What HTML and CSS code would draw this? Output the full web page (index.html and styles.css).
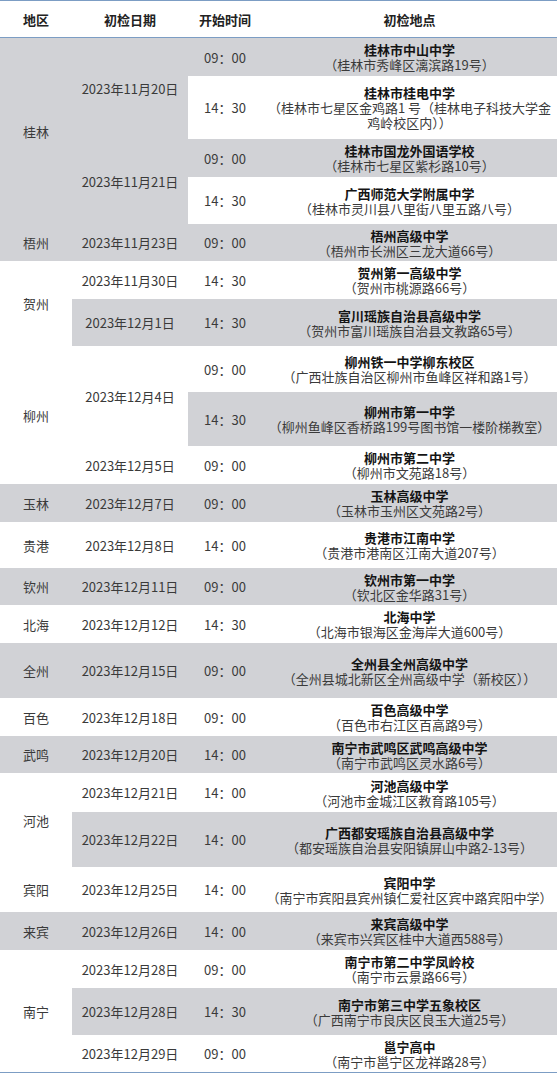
FILE: index.html
```html
<!DOCTYPE html>
<html lang="zh-CN">
<head>
<meta charset="utf-8">
<title>初检安排</title>
<link rel="stylesheet" href="styles.css">
</head>
<body>
<div class="wrap">
<table class="sched">
  <colgroup>
    <col class="c-area"><col class="c-date"><col class="c-time"><col class="c-place">
  </colgroup>
  <thead>
    <tr class="head"><th>地区</th><th>初检日期</th><th>开始时间</th><th>初检地点</th></tr>
  </thead>
  <tbody>
    <tr class="h38">
      <td class="g" rowspan="4">桂林</td>
      <td class="g" rowspan="2">2023年11月20日</td>
      <td class="g">09：00</td>
      <td class="g place"><b>桂林市中山中学</b><span>（桂林市秀峰区漓滨路19号）</span></td>
    </tr>
    <tr class="h63">
      <td>14：30</td>
      <td class="place"><b>桂林市桂电中学</b><span>（桂林市七星区金鸡路1 号（桂林电子科技大学金鸡岭校区内））</span></td>
    </tr>
    <tr class="h38">
      <td class="g" rowspan="2">2023年11月21日</td>
      <td class="g">09：00</td>
      <td class="g place"><b>桂林市国龙外国语学校</b><span>（桂林市七星区紫杉路10号）</span></td>
    </tr>
    <tr class="h47">
      <td>14：30</td>
      <td class="place"><b>广西师范大学附属中学</b><span>（桂林市灵川县八里街八里五路八号）</span></td>
    </tr>
    <tr class="h37">
      <td class="g">梧州</td>
      <td class="g">2023年11月23日</td>
      <td class="g">09：00</td>
      <td class="g place"><b>梧州高级中学</b><span>（梧州市长洲区三龙大道66号）</span></td>
    </tr>
    <tr class="h38">
      <td rowspan="2">贺州</td>
      <td>2023年11月30日</td>
      <td>14：30</td>
      <td class="place"><b>贺州第一高级中学</b><span>（贺州市桃源路66号）</span></td>
    </tr>
    <tr class="h47">
      <td class="g">2023年12月1日</td>
      <td class="g">14：30</td>
      <td class="g place"><b>富川瑶族自治县高级中学</b><span>（贺州市富川瑶族自治县文教路65号）</span></td>
    </tr>
    <tr class="h46">
      <td rowspan="3">柳州</td>
      <td rowspan="2">2023年12月4日</td>
      <td>09：00</td>
      <td class="place"><b>柳州铁一中学柳东校区</b><span>（广西壮族自治区柳州市鱼峰区祥和路1号）</span></td>
    </tr>
    <tr class="h54">
      <td class="g">14：30</td>
      <td class="g place"><b>柳州市第一中学</b><span>（柳州鱼峰区香桥路199号图书馆一楼阶梯教室）</span></td>
    </tr>
    <tr class="h38">
      <td>2023年12月5日</td>
      <td>09：00</td>
      <td class="place"><b>柳州市第二中学</b><span>（柳州市文苑路18号）</span></td>
    </tr>
    <tr class="h38 g">
      <td>玉林</td>
      <td>2023年12月7日</td>
      <td>09：00</td>
      <td class="place"><b>玉林高级中学</b><span>（玉林市玉州区文苑路2号）</span></td>
    </tr>
    <tr class="h46">
      <td>贵港</td>
      <td>2023年12月8日</td>
      <td>14：00</td>
      <td class="place"><b>贵港市江南中学</b><span>（贵港市港南区江南大道207号）</span></td>
    </tr>
    <tr class="h37 g">
      <td>钦州</td>
      <td>2023年12月11日</td>
      <td>09：00</td>
      <td class="place"><b>钦州市第一中学</b><span>（钦北区金华路31号）</span></td>
    </tr>
    <tr class="h38">
      <td>北海</td>
      <td>2023年12月12日</td>
      <td>14：30</td>
      <td class="place"><b>北海中学</b><span>（北海市银海区金海岸大道600号）</span></td>
    </tr>
    <tr class="h55 g">
      <td>全州</td>
      <td>2023年12月15日</td>
      <td>09：00</td>
      <td class="place"><b>全州县全州高级中学</b><span>（全州县城北新区全州高级中学（新校区））</span></td>
    </tr>
    <tr class="h38">
      <td>百色</td>
      <td>2023年12月18日</td>
      <td>09：00</td>
      <td class="place"><b>百色高级中学</b><span>（百色市右江区百高路9号）</span></td>
    </tr>
    <tr class="h37 g">
      <td>武鸣</td>
      <td>2023年12月20日</td>
      <td>14：00</td>
      <td class="place"><b>南宁市武鸣区武鸣高级中学</b><span>（南宁市武鸣区灵水路6号）</span></td>
    </tr>
    <tr class="h39">
      <td rowspan="2">河池</td>
      <td>2023年12月21日</td>
      <td>14：00</td>
      <td class="place"><b>河池高级中学</b><span>（河池市金城江区教育路105号）</span></td>
    </tr>
    <tr class="h55">
      <td class="g">2023年12月22日</td>
      <td class="g">14：00</td>
      <td class="g place"><b>广西都安瑶族自治县高级中学</b><span>（都安瑶族自治县安阳镇屏山中路2-13号）</span></td>
    </tr>
    <tr class="h45">
      <td>宾阳</td>
      <td>2023年12月25日</td>
      <td>14：00</td>
      <td class="place"><b>宾阳中学</b><span>（南宁市宾阳县宾州镇仁爱社区宾中路宾阳中学）</span></td>
    </tr>
    <tr class="h38 g">
      <td>来宾</td>
      <td>2023年12月26日</td>
      <td>14：00</td>
      <td class="place"><b>来宾高级中学</b><span>（来宾市兴宾区桂中大道西588号）</span></td>
    </tr>
    <tr class="h38">
      <td rowspan="3">南宁</td>
      <td>2023年12月28日</td>
      <td>09：00</td>
      <td class="place"><b>南宁市第二中学凤岭校</b><span>（南宁市云景路66号）</span></td>
    </tr>
    <tr class="h47">
      <td class="g">2023年12月28日</td>
      <td class="g">14：30</td>
      <td class="g place"><b>南宁市第三中学五象校区</b><span>（广西南宁市良庆区良玉大道25号）</span></td>
    </tr>
    <tr class="h37">
      <td>2023年12月29日</td>
      <td>09：00</td>
      <td class="place"><b>邕宁高中</b><span>（南宁市邕宁区龙祥路28号）</span></td>
    </tr>
  </tbody>
</table>
</div>
</body>
</html>
```

FILE: styles.css
```css
html, body {
  margin: 0;
  padding: 0;
  background: #ffffff;
}

body {
  font-family: "Noto Sans CJK SC", "Noto Sans", sans-serif;
  font-size: 13px;
  color: #3a3a3a;
}

.wrap {
  width: 557px;
  border-top: 1px solid #7c9dc4;
  border-bottom: 1px solid #7c9dc4;
}

.sched {
  width: 557px;
  table-layout: fixed;
  border-collapse: separate;
  border-spacing: 0;
}

.c-area { width: 72px; }
.c-date { width: 116px; }
.c-time { width: 74px; }
.c-place { width: 295px; }

.head th {
  height: 36px;
  padding: 0;
  font-weight: bold;
  color: #222;
  text-align: center;
  vertical-align: middle;
  border-bottom: 1px solid #7c9dc4;
  line-height: 15px;
}

.sched td {
  padding: 0 2px;
  text-align: center;
  vertical-align: middle;
  line-height: 15px;
  white-space: normal;
}

.sched td.g,
.sched tr.g td {
  background: #d1d2d6;
}

.place b {
  display: block;
  font-weight: bold;
  color: #141414;
}

.place span {
  display: block;
  color: #3a3a3a;
}

.h37 { height: 37px; }
.h38 { height: 38px; }
.h39 { height: 39px; }
.h45 { height: 45px; }
.h46 { height: 46px; }
.h47 { height: 47px; }
.h54 { height: 54px; }
.h55 { height: 55px; }
.h63 { height: 63px; }
```
